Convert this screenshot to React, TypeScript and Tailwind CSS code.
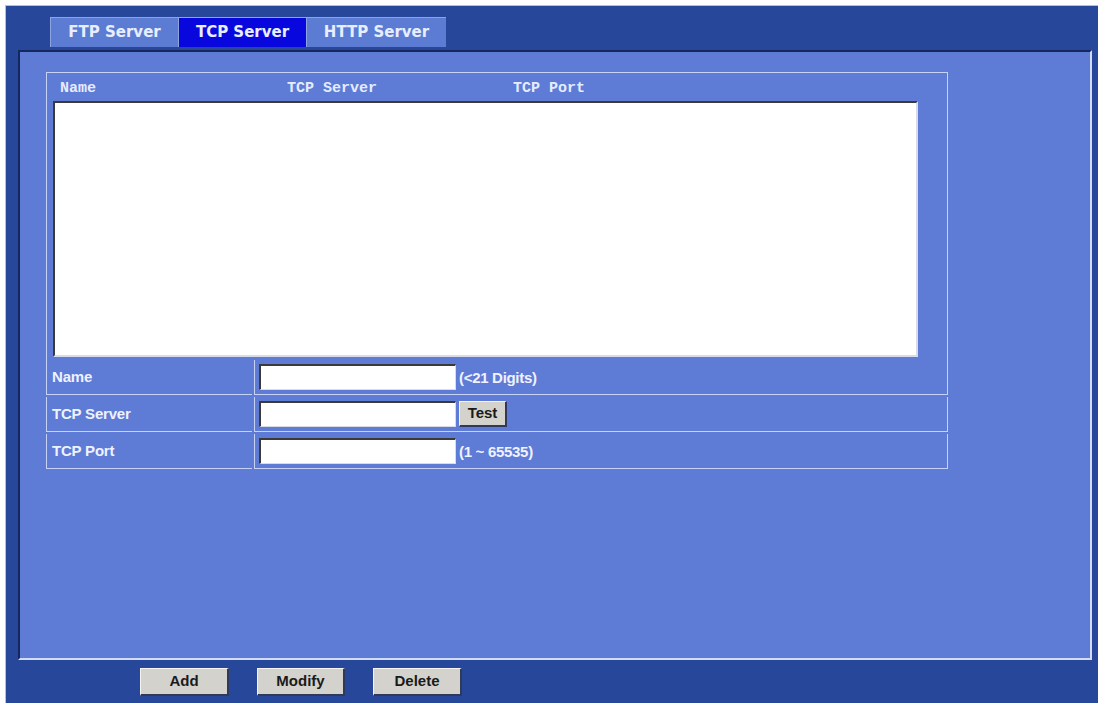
import React from "react";

const tabFont = { fontFamily: '"DejaVu Sans", Verdana, sans-serif' };
const monoFont = { fontFamily: '"Liberation Mono", "Courier New", monospace' };
const sansFont = { fontFamily: '"Liberation Sans", Arial, sans-serif' };

function Tab({ label, active, w }: { label: string; active?: boolean; w: string }) {
  return (
    <div
      className={
        w +
        " h-[30px] flex items-center justify-center text-[15px] font-bold text-[#e8eeff] border-t border-l border-[#8ea3e0] " +
        (active ? "bg-[#0808de]" : "bg-[#5b7cd2]")
      }
      style={tabFont}
    >
      {label}
    </div>
  );
}

function TextBox() {
  return (
    <div className="w-[197px] h-[26px] bg-white border-t-2 border-l-2 border-t-[#3a3a3a] border-l-[#3a3a3a] border-b border-r border-b-[#d8dce8] border-r-[#d8dce8]" />
  );
}

function FormRow({ label, children }: { label: string; children: React.ReactNode }) {
  return (
    <div className="flex h-[35px] gap-[2px]">
      <div
        className="w-[206px] flex items-center pl-[5px] border-l border-b border-[#c6d2f6] text-[15px] font-bold text-[#eef2ff] tracking-[-0.2px]"
        style={sansFont}
      >
        {label}
      </div>
      <div className="flex-1 flex items-center pl-[4px] gap-[3px] border-l border-b border-r border-[#c6d2f6]">
        {children}
      </div>
    </div>
  );
}

function Hint({ text }: { text: string }) {
  return (
    <span className="text-[15px] font-bold text-[#eef2ff] tracking-[-0.3px] pt-[3px]" style={sansFont}>
      {text}
    </span>
  );
}

function GrayButton({ label, w }: { label: string; w: string }) {
  return (
    <button
      className={
        w +
        " h-[28px] bg-[#d4d2cc] border-t border-l border-[#f4f4f4] border-b-2 border-r-2 border-b-[#303a58] border-r-[#303a58] text-[15px] font-bold text-[#1a1a1a] flex items-center justify-center"
      }
      style={sansFont}
    >
      {label}
    </button>
  );
}

export default function App() {
  return (
    <div className="w-[1100px] h-[706px] bg-white pt-[5px] pl-[5px] pr-[2px] pb-[3px]">
      <div className="w-full h-full bg-[#27479b] border-t border-l border-[#b4c0e0] flex flex-col">
        {/* tab strip */}
        <div className="flex pl-[44px] pt-[11px] h-[43px]">
          <Tab label="FTP Server" w="w-[128px]" />
          <Tab label="TCP Server" w="w-[128px]" active />
          <Tab label="HTTP Server" w="w-[140px]" />
        </div>

        {/* main panel */}
        <div className="ml-[12px] mr-[6px] mt-[1px] h-[610px] bg-[#5e7bd6] border-t-2 border-l-2 border-t-[#16275e] border-l-[#16275e] border-b-2 border-r-2 border-b-[#d0dcfa] border-r-[#d0dcfa] pt-[20px] pl-[26px]">
          <div className="w-[902px]">
            <div className="border-t border-l border-r border-[#c6d2f6] pb-[3px]">
              <div className="h-[28px] flex items-center pt-[5px] text-[15px] font-bold text-[#e6ecff]" style={monoFont}>
                <span className="w-[240px] pl-[13px]">Name</span>
                <span className="w-[226px]">TCP Server</span>
                <span>TCP Port</span>
              </div>
              <div className="ml-[6px] w-[865px] h-[256px] bg-white border-t-2 border-l-2 border-t-[#3a3a3a] border-l-[#3a3a3a] border-b-2 border-r-2 border-b-[#d8dce8] border-r-[#d8dce8]" />
            </div>
            <div className="flex flex-col gap-[2px]">
              <FormRow label="Name">
                <TextBox />
                <Hint text="(<21 Digits)" />
              </FormRow>
              <FormRow label="TCP Server">
                <TextBox />
                <button
                  className="w-[48px] h-[26px] bg-[#d4d2cc] border-t border-l border-[#f4f4f4] border-b-2 border-r-2 border-b-[#303a58] border-r-[#303a58] text-[15px] font-bold text-[#1a1a1a]"
                  style={sansFont}
                >
                  Test
                </button>
              </FormRow>
              <FormRow label="TCP Port">
                <TextBox />
                <Hint text="(1 ~ 65535)" />
              </FormRow>
            </div>
          </div>
        </div>

        {/* action buttons */}
        <div className="flex pl-[134px] pt-[8px] gap-[28px]">
          <GrayButton label="Add" w="w-[89px]" />
          <GrayButton label="Modify" w="w-[88px]" />
          <GrayButton label="Delete" w="w-[89px]" />
        </div>
      </div>
    </div>
  );
}
